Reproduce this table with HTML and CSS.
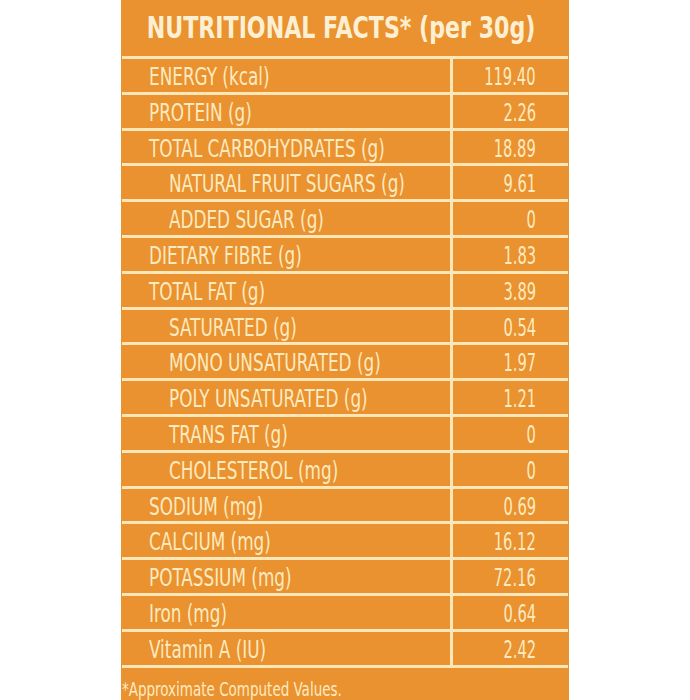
FILE: index.html
```html
<!DOCTYPE html>
<html>
<head>
<meta charset="utf-8">
<link rel="stylesheet" href="styles.css">
</head>
<body>
<div class="panel">
  <h1 class="title"><span class="squeeze">NUTRITIONAL FACTS* (per 30g)</span></h1>
  <div class="table">
    <div class="row"><div class="label"><span class="txt">ENERGY (kcal)</span></div><div class="val"><span class="num">119.40</span></div></div>
    <div class="row"><div class="label"><span class="txt">PROTEIN (g)</span></div><div class="val"><span class="num">2.26</span></div></div>
    <div class="row"><div class="label"><span class="txt">TOTAL CARBOHYDRATES (g)</span></div><div class="val"><span class="num">18.89</span></div></div>
    <div class="row"><div class="label sub"><span class="txt">NATURAL FRUIT SUGARS (g)</span></div><div class="val"><span class="num">9.61</span></div></div>
    <div class="row"><div class="label sub"><span class="txt">ADDED SUGAR (g)</span></div><div class="val"><span class="num">0</span></div></div>
    <div class="row"><div class="label"><span class="txt">DIETARY FIBRE (g)</span></div><div class="val"><span class="num">1.83</span></div></div>
    <div class="row"><div class="label"><span class="txt">TOTAL FAT (g)</span></div><div class="val"><span class="num">3.89</span></div></div>
    <div class="row"><div class="label sub"><span class="txt">SATURATED (g)</span></div><div class="val"><span class="num">0.54</span></div></div>
    <div class="row"><div class="label sub"><span class="txt">MONO UNSATURATED (g)</span></div><div class="val"><span class="num">1.97</span></div></div>
    <div class="row"><div class="label sub"><span class="txt">POLY UNSATURATED (g)</span></div><div class="val"><span class="num">1.21</span></div></div>
    <div class="row"><div class="label sub"><span class="txt">TRANS FAT (g)</span></div><div class="val"><span class="num">0</span></div></div>
    <div class="row"><div class="label sub"><span class="txt">CHOLESTEROL (mg)</span></div><div class="val"><span class="num">0</span></div></div>
    <div class="row"><div class="label"><span class="txt">SODIUM (mg)</span></div><div class="val"><span class="num">0.69</span></div></div>
    <div class="row"><div class="label"><span class="txt">CALCIUM (mg)</span></div><div class="val"><span class="num">16.12</span></div></div>
    <div class="row"><div class="label"><span class="txt">POTASSIUM (mg)</span></div><div class="val"><span class="num">72.16</span></div></div>
    <div class="row"><div class="label"><span class="txt">Iron (mg)</span></div><div class="val"><span class="num">0.64</span></div></div>
    <div class="row"><div class="label"><span class="txt">Vitamin A (IU)</span></div><div class="val"><span class="num">2.42</span></div></div>
  </div>
  <p class="note"><span class="txt">*Approximate Computed Values.</span></p>
</div>
</body>
</html>
```
FILE: styles.css
```css
html, body {
  margin: 0;
  padding: 0;
  background: #ffffff;
}
body {
  font-family: "DejaVu Sans Condensed", "DejaVu Sans", sans-serif;
  font-stretch: condensed;
  color: #fdeac0;
}
.panel {
  margin-left: 121px;
  width: 448px;
  height: 700px;
  background: #e9922f;
  overflow: hidden;
  display: flex;
  flex-direction: column;
}
.title {
  margin: 0;
  height: 59px;
  font-size: 30px;
  font-weight: bold;
  line-height: 56px;
  white-space: nowrap;
  color: #fdf0d2;
  display: flex;
  justify-content: center;
  padding-right: 8px;
}
.squeeze {
  display: inline-block;
  flex: none;
  transform: scaleX(0.82);
  transform-origin: center;
}
.table {
  margin-left: 1px;
  margin-right: 1px;
  border-top: 3px solid #fde6b8;
}
.row {
  display: grid;
  grid-template-columns: 331px 1fr;
  height: 32.8px;
  border-bottom: 3px solid #fde6b8;
  font-size: 24px;
  line-height: 33px;
}
.label, .val {
  padding-top: 2px;
  height: 30.8px;
  line-height: 33px;
}
.label {
  padding-left: 27px;
  border-right: 3px solid #fde6b8;
  white-space: nowrap;
}
.label.sub {
  padding-left: 47px;
}
.txt {
  display: inline-block;
  transform: scaleX(0.78);
  transform-origin: left center;
}
.val {
  text-align: right;
  padding-right: 32px;
  white-space: nowrap;
}
.num {
  display: inline-block;
  transform: scaleX(0.68);
  transform-origin: right center;
}
.note {
  margin: 9px 0 0 1px;
  font-size: 20px;
  line-height: 24px;
  white-space: nowrap;
}
.note .txt {
  transform: scaleX(0.75);
}
```
